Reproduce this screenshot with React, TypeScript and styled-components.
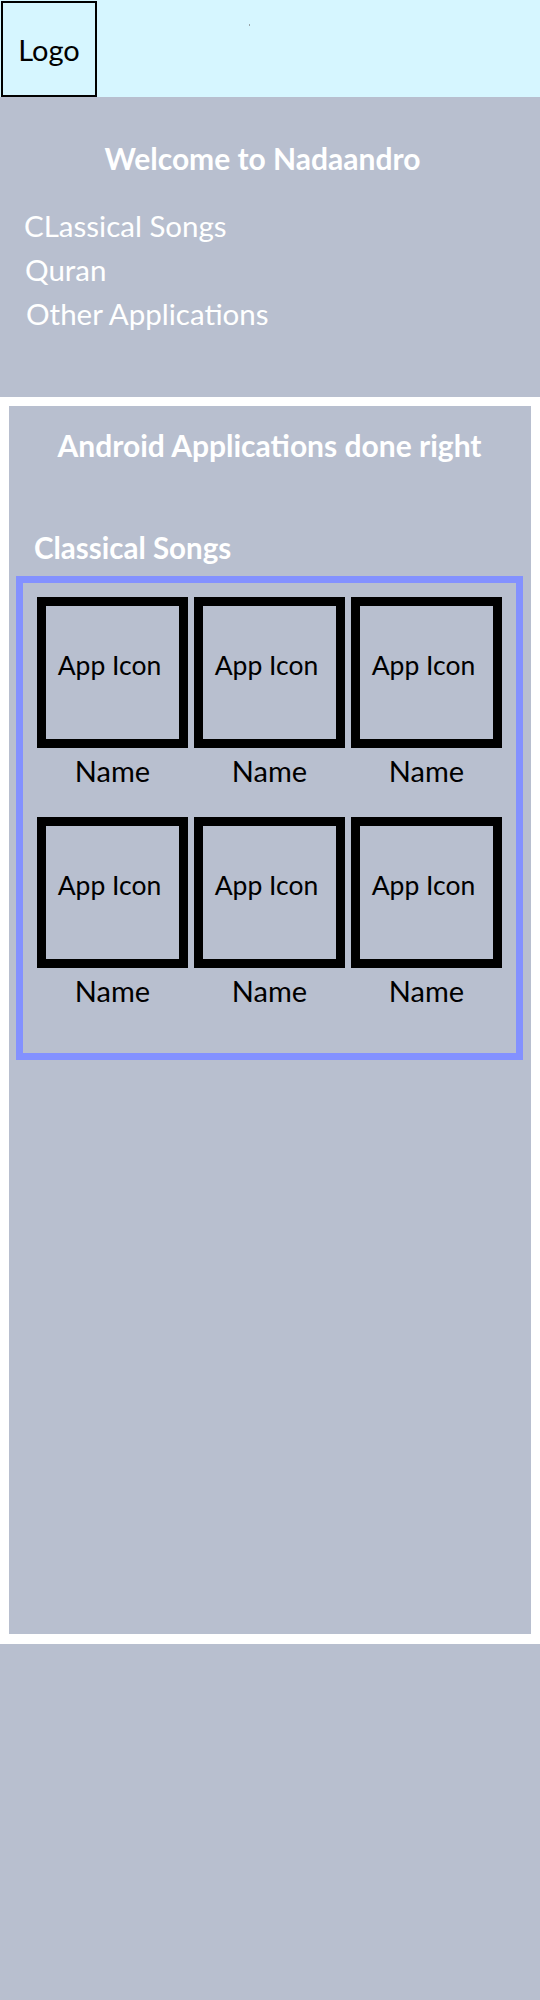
import React from 'react';
import styled, {createGlobalStyle} from 'styled-components';

const GlobalStyle = createGlobalStyle`
  html, body {
    margin: 0;
    padding: 0;
    background: #ffffff;
  }
  body {
    font-family: Lato, "Open Sans", "Noto Sans", sans-serif;
  }
`;

const Page = styled.div`
  width: 540px;
  display: flex;
  flex-direction: column;
`;

const Header = styled.header`
  display: flex;
  align-items: flex-start;
  height: 97px;
  padding: 1px 0 0 1px;
  box-sizing: border-box;
  background: #d6f6ff;
`;
const LogoBox = styled.div`
  width: 96px;
  height: 96px;
  box-sizing: border-box;
  border: 2px solid #000;
  display: flex;
  align-items: center;
  justify-content: center;
  font-size: 29px;
  color: #000;
`;
const Speck = styled.span`
  width: 1px;
  height: 2px;
  margin: 23px 0 0 152px;
  background: #9aa4a8;
`;

const Intro = styled.section`
  height: 300px;
  box-sizing: border-box;
  padding-top: 43px;
  background: #b8bfcf;
  color: #fff;
`;
const IntroTitle = styled.h1`
  margin: 0;
  padding-right: 15px;
  font-size: 30px;
  line-height: 36px;
  font-weight: 700;
  text-align: center;
`;
const NavList = styled.ul`
  list-style: none;
  margin: 28px 0 0;
  padding: 0 0 0 24px;
`;
const NavItem = styled.li<{indent: number}>`
  padding-left: ${({indent}) => indent}px;
  font-size: 29.5px;
  line-height: 44px;
`;

const Showcase = styled.main`
  padding: 9px 9px 10px;
  background: #fff;
`;
const Panel = styled.div`
  height: 1228px;
  box-sizing: border-box;
  padding: 21px 8px 0 7px;
  background: #b8bfcf;
  color: #fff;
`;
const Tagline = styled.h2`
  margin: 0;
  font-size: 30px;
  line-height: 36px;
  font-weight: 700;
  text-align: center;
`;
const CategoryTitle = styled.h3`
  margin: 67px 0 0 18px;
  font-size: 29.5px;
  line-height: 36px;
  font-weight: 700;
`;
const AppFrame = styled.div`
  margin-top: 10px;
  width: 507px;
  box-sizing: border-box;
  border: 7px solid #8391ff;
  padding: 14px 14px 44px;
`;
const AppGrid = styled.div`
  display: grid;
  grid-template-columns: repeat(3, 151px);
  column-gap: 6px;
  row-gap: 28px;
`;
const Tile = styled.div`
  display: flex;
  flex-direction: column;
  align-items: center;
  color: #000;
`;
const IconBox = styled.div`
  width: 151px;
  height: 151px;
  box-sizing: border-box;
  border: 9px solid #000;
  padding: 43px 6px 0 0;
  font-size: 26.5px;
  line-height: 32px;
  text-align: center;
`;
const AppName = styled.div`
  margin-top: 5px;
  font-size: 29px;
  line-height: 36px;
`;

const Footer = styled.footer`
  height: 356px;
  background: #b8bfcf;
`;

const navItems = [
  {label: 'CLassical Songs', indent: 0},
  {label: 'Quran', indent: 1},
  {label: 'Other Applications', indent: 2},
];

const apps = Array.from({length: 6}, (_, i) => ({id: i, name: 'Name'}));

export default function App() {
  return (
    <Page>
      <GlobalStyle />
      <Header>
        <LogoBox>Logo</LogoBox>
        <Speck />
      </Header>
      <Intro>
        <IntroTitle>Welcome to Nadaandro</IntroTitle>
        <NavList>
          {navItems.map(({label, indent}) => (
            <NavItem key={label} indent={indent}>
              {label}
            </NavItem>
          ))}
        </NavList>
      </Intro>
      <Showcase>
        <Panel>
          <Tagline>Android Applications done right</Tagline>
          <CategoryTitle>Classical Songs</CategoryTitle>
          <AppFrame>
            <AppGrid>
              {apps.map(app => (
                <Tile key={app.id}>
                  <IconBox>App Icon</IconBox>
                  <AppName>{app.name}</AppName>
                </Tile>
              ))}
            </AppGrid>
          </AppFrame>
        </Panel>
      </Showcase>
      <Footer />
    </Page>
  );
}
